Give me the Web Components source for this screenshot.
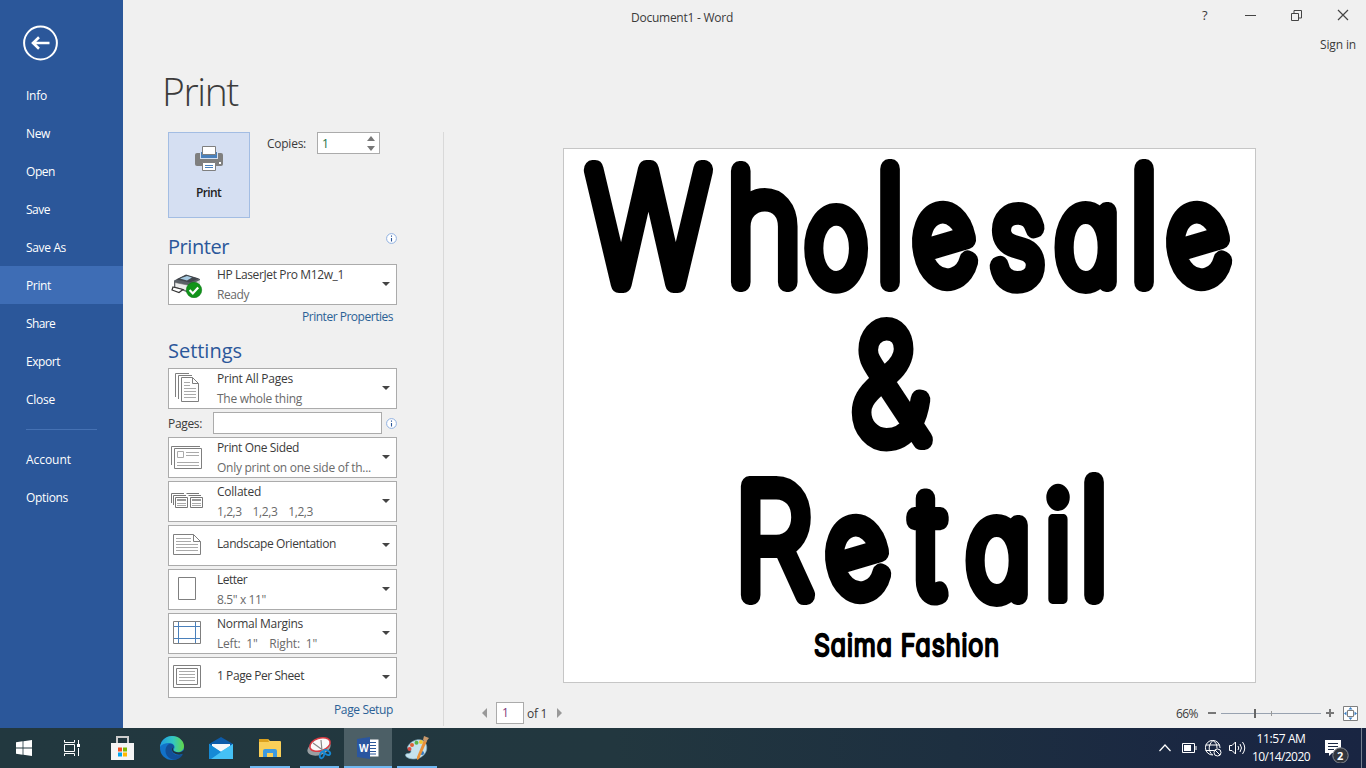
<!DOCTYPE html>
<html lang="en">
<head>
<meta charset="utf-8">
<title>Document1 - Word</title>
<style>
html,body{margin:0;height:100%;overflow:hidden}
body{font-family:"Open Sans","Noto Sans",sans-serif;font-size:12px;color:#3b3b3b;background:#f0f0f0}
</style>
</head>
<body>
<word-app></word-app>
<script>
const make = (name, html, init) => customElements.define(name, class extends HTMLElement {
  constructor() {
    super();
    this.attachShadow({mode: 'open'}).innerHTML = typeof html === 'function' ? html(this) : html;
    if (init) init(this);
  }
});

/* glyph icons */
const icons = {
  back: [36,36,'<circle cx="17.500" cy="18" r="16.400" fill="none" stroke="#fff" stroke-width="2"/><path d="M10 18H26.500M16 12.200 10 18l6 5.800" fill="none" stroke="#fff" stroke-width="2.600"/>'],
  printer: [28,26,'<path d="M2 8h24q2 0 2 2v9q0 2-2 2H2q-2 0-2-2v-9q0-2 2-2z" fill="#7f7f7f"/><path d="M5 7h18v7H5z" fill="#d5e0f2"/><path d="M6 7h16v6H6z" fill="#4a80bb"/><path d="M7.500 1.500h13v8h-13zM7.500 17.500h13v8h-13z" fill="#fff" stroke="#7f7f7f"/><path d="M10 20.500h8M10 22.500h8" stroke="#4a80bb"/><rect x="24" y="17" width="2" height="2" fill="#fff"/>'],
  device: [34,28,'<path d="m3 10.500 12-5.500 14 4v9l-10 5.500L3 17z" fill="#5a6067"/><path d="m5 9.500 10-5 13 4-9 4z" fill="#42474d"/><path d="m9 8.500 7-2.500 5 1.500-5 3z" fill="#a7cbe2"/><path d="m4 12.500 15 3v6.500L4 17z" fill="#eceded" stroke="#666" stroke-width=".6"/><path d="m21 14 8-4v7l-8 5z" fill="#d5d8db"/><path d="m2 17 10 2.500-4 3-7-2.500z" fill="#fff" stroke="#333" stroke-width="1.200"/><circle cx="23" cy="20" r="7.700" fill="#11941a" stroke="#087712" stroke-width=".6"/><path d="m18.600 20 3.200 3.400 5.400-6" fill="none" stroke="#fff" stroke-width="2.200"/>'],
  pages: [34,32,'<g fill="none" stroke="#7f7f7f"><path d="M4.500 25V1.500H18M7.500 27V3.500H21"/><path d="M10.500 5.500H21.500L27.500 11.500V29.500H10.500zM21.500 5.500V11.500H27.500" fill="#fff"/></g><path d="M13 10.500h6M13 13.500h6M13 16.500h12M13 19.500h12M13 22.500h12M13 25.500h12" stroke="#aaa"/>'],
  oneside: [34,28,'<g fill="none" stroke="#7f7f7f"><path d="M.500 22V3.500H29"/><path d="M3.500 5.500h27v20h-27z" fill="#fff"/><path d="M6.500 8.500h6v6h-6z" stroke="#aaa"/></g><path d="M15 9.500h13M15 12.500h13M6 19.500h22M6 22.500h22" stroke="#aaa"/>'],
  collated: [34,20,'<g fill="none" stroke="#777"><path d="M.500 12V2.500H13M2.500 14V4.500H15M15.500 2.500H28M17.500 4.500H30"/><path d="M4.500 6.500h12v10h-12zM19.500 6.500h12v10h-12z" fill="#fff"/></g><path d="M6 9h9M21 9h9" stroke="#999" stroke-width="2"/><path d="M6 12.500h9M6 14.500h9M21 12.500h9M21 14.500h9" stroke="#aaa"/>'],
  landscape: [34,24,'<path d="M2.500 1.500H22.500L29.500 8.500V21.500H2.500zM22.500 1.500V8.500H29.500" fill="#fff" stroke="#7f7f7f"/><path d="M5 5.500h15M5 8.500h15M5 11.500h22M5 14.500h22M5 17.500h22" stroke="#aaa"/>'],
  letter: [34,26,'<path d="M7.500 1.500h17v22h-17z" fill="#fff" stroke="#7f7f7f"/>'],
  margins: [34,26,'<path d="M2.500 1.500h27v22h-27z" fill="#fff" stroke="#7f7f7f"/><path d="M7.500 2v21M24.500 2v21M3 6.500h26M3 18.500h26" stroke="#4a80bb"/>'],
  sheet: [34,26,'<path d="M2.500 1.500h27v22h-27zM5.500 4.500h21v16h-21z" fill="#fff" stroke="#7f7f7f"/><path d="M8 7.500h16M8 10.500h16M8 13.500h16M8 16.500h16" stroke="#aaa"/>'],
  info: [11,11,'<circle cx="5.500" cy="5.500" r="4.900" fill="#fff" stroke="#8fb0e0"/><path d="M5.500 5v3.500M5.500 2.500v1.200" stroke="#2b579a" stroke-width="1.100"/>'],
  min: [11,11,'<path d="M0 5.500h11" stroke="#444"/>'],
  restore: [11,11,'<path d="M.500 3.500h7v7h-7zM3 3V.500h7.500V8H8" fill="none" stroke="#444"/>'],
  close: [12,12,'<path d="m1 1 10 10M11 1 1 11" stroke="#444" stroke-width="1.200"/>'],
  fit: [15,15,'<path d="M.500.500h14v14H.500z" fill="#fff" stroke="#7f7f7f"/><path d="M4.500 4.500h6v6h-6z" fill="none" stroke="#7f7f7f"/><path d="M5.500 3.500h4L7.500 1zM5.500 11.500h4l-2 2.500zM3.500 5.500v4L1 7.500zM11.500 5.500v4l2.500-2z" fill="#3b7fc4"/>'],
  start: [16,16,'<path d="m0 2.200 6.600-.9v6.300H0zM7.400 1.200 16 0v7.600H7.400zM0 8.400h6.600v6.300L0 13.800zM7.400 8.400H16V16l-8.600-1.200z" fill="#fff"/>'],
  task: [16,16,'<path d="M.500 0v2.500h10V0M.500 16v-2.500h10V16M.500 4.500h10v7H.500zM14.500 0v4M14.500 8v8" fill="none" stroke="#fff"/><path d="M13 4h3v3h-3z" fill="#fff"/>'],
  store: [24,26,'<path d="M7 8V2h11v6" fill="none" stroke="#ccc" stroke-width="2"/><path d="M1 8h23v17H1z" fill="#f5f5f5"/><path d="M8 12.500h4v4H8z" fill="#f25022"/><path d="M13 12.500h4v4h-4z" fill="#7fba00"/><path d="M8 17.500h4v4H8z" fill="#00a4ef"/><path d="M13 17.500h4v4h-4z" fill="#ffb900"/>'],
  edge: [24,24,'<defs><linearGradient id="g"><stop stop-color="#1f9de5"/><stop offset=".55" stop-color="#34c7c0"/><stop offset="1" stop-color="#62d846"/></linearGradient></defs><circle cx="12" cy="12" r="12" fill="#1272c9"/><path d="M0 11C1 4 6 0 12 0c7 0 12 5 12 10 0 4-3 6-6 6-3 0-5-1-4-3 2-3-1-6-5-6-4 0-7 1-9 4z" fill="url(#g)"/><path d="M9 8c-5 3-5 12 2 15 5 2 10-1 12-5-5 3-12 0-11-5 0-1 1-2 2-2 0-2-2-4-5-3z" fill="#124f98"/><path d="M14 11c-1 1-2 4 2 5 3 1 6 0 8-2l0 3c-5 4-13 0-12-4 0-1 1-2 2-2z" fill="#20343d"/>'],
  mail: [24,22,'<path d="M0 7 12 0l12 7v3H0z" fill="#0d5ba9"/><path d="M3 7h18v10H3z" fill="#f5f7fa"/><path d="m0 7 12 8 12-8v15H0z" fill="#27a7ec"/><path d="M24 7 0 22h24z" fill="#45c1f5"/><path d="m0 7 12 8L2 22H0z" fill="#168ad5"/>'],
  folder: [22,19,'<path d="M0 1q0-1 1-1h8l2 2h10q1 0 1 1v15H0z" fill="#f9cf58"/><path d="M0 0h9l1 3H0z" fill="#dca11d"/><path d="M4 18v-6q0-2 2-2h10q2 0 2 2v6h-4v-4H8v4z" fill="#3c9ae0"/>'],
  snip: [26,24,'<ellipse cx="12" cy="12" rx="12" ry="7" fill="#9a9fa2" transform="rotate(-18 12 12)"/><ellipse cx="13" cy="8.500" rx="10.500" ry="6.300" fill="#fafafa" stroke="#d93b43" stroke-width="1.500" transform="rotate(-18 13 8.500)"/><path d="m6 7 11 8M14 4l1 11" stroke="#888" stroke-width="1.200"/><g fill="none" stroke="#1688d2" stroke-width="1.800"><ellipse cx="15" cy="19" rx="2" ry="3.300" transform="rotate(20 15 19)"/><ellipse cx="20" cy="16.500" rx="3.500" ry="2" transform="rotate(30 20 16.500)"/></g>'],
  word: [22,22,'<path d="M12 2.500h9.500v17H12z" fill="#fff"/><path d="M13 5.500h6M13 8.500h6M13 11.500h6M13 14.500h6M13 17h6" stroke="#2b579a"/><path d="m0 2 13-2v22L0 20z" fill="#2a56a0"/>'],
  paint: [24,24,'<path d="M3 10C7 3 18 1 21 8c3 7-3 15-12 15-6 0-10-3-8-5 2-1 5 0 5-3 0-2-5-1-3-5z" fill="#c5e2ed" stroke="#7fa9bb" stroke-width=".7"/><circle cx="4.500" cy="13" r="2" fill="#d94b42"/><circle cx="7" cy="9" r="2" fill="#e06036"/><circle cx="11.500" cy="6.800" r="2" fill="#59b44a"/><circle cx="16" cy="6" r="2" fill="#f0c735"/><circle cx="17" cy="17" r="2" fill="#3479bf"/><path d="m19 4 3 1-8 18-2 1v-3z" fill="#e99138"/><path d="m18 4 1-4 5 2-3 4z" fill="#c8986c"/>'],
  up: [12,8,'<path d="m.500 7 5.500-6 5.500 6" fill="none" stroke="#fff" stroke-width="1.200"/>'],
  battery: [15,10,'<path d="M.500.500h12v9H.500zM14 3v4" fill="none" stroke="#fff"/><path d="M2 2h7v6H2z" fill="#fff"/>'],
  globe: [17,17,'<g fill="none" stroke="#fff"><path d="M15 8A7.300 7.300 0 1 0 8 15M.700 5h14M.700 10.500H9M8 .500C3 5 3 11 7.500 15M8 .500c3 2 4 4 4 8"/><circle cx="12.500" cy="12.500" r="3.500"/><path d="m10 10 5 5"/></g>'],
  volume: [17,14,'<path d="M.500 4.500H3L6.500 1v12L3 9.500H.500zM9 5q1.500 2 0 4M11 3q3 4 0 8M13.500 1q4.500 6 0 12" fill="none" stroke="#fff"/>'],
  note: [24,23,'<path d="M0 0h16v13H7l-3 3v-3H0z" fill="#fff"/><path d="M3 3.500h10M3 6.500h10M3 9.500h6" stroke="#1b2944"/><circle cx="15.500" cy="15.500" r="7.700" fill="#32363d" stroke="#858a92"/>'],
};
make('ui-icon', h => {
  const [w, ht, body] = icons[h.getAttribute('name')];
  return `<style>:host{display:block;flex:none;width:${w}px;height:${ht}px}svg{display:block}</style><svg width="${w}" height="${ht}" viewBox="0 0 ${w} ${ht}">${body}</svg>`;
});

/* backstage navigation */
make('nav-item', h => `<style>:host{display:flex;align-items:center;height:38px;padding-left:26px;color:#fff;box-sizing:border-box}:host([active]){background:#3e6db5}</style><slot></slot>`);
make('back-nav', `<style>
:host{display:block;background:#2b579a;height:728px}
ui-icon{margin:0 0 0 23px;padding:25px 0 15px}hr{border:0;height:1px;background:#4571b3;margin:11px 26px 10px;width:71px}</style>
<ui-icon name="back"></ui-icon>
<nav-item><fit-text w="21">Info</fit-text></nav-item><nav-item><fit-text w="24">New</fit-text></nav-item><nav-item><fit-text w="29">Open</fit-text></nav-item><nav-item><fit-text w="24">Save</fit-text></nav-item><nav-item><fit-text w="40">Save As</fit-text></nav-item><nav-item active><fit-text w="25">Print</fit-text></nav-item><nav-item><fit-text w="29">Share</fit-text></nav-item><nav-item><fit-text w="34">Export</fit-text></nav-item><nav-item><fit-text w="29">Close</fit-text></nav-item>
<hr><nav-item><fit-text w="45">Account</fit-text></nav-item><nav-item><fit-text w="42">Options</fit-text></nav-item>`);

/* title bar */
make('title-bar', `<style>
:host{display:block;height:60px}.r{display:flex;align-items:center;height:30px;padding-top:2px}
.r>fit-text:first-child{margin-left:508px}.c{display:flex;align-items:center;margin-left:auto;gap:35px;padding-right:17px;margin-top:-4px}
.s{display:flex;justify-content:flex-end;padding:4px 10px 0 0}</style>
<div class="r"><fit-text w="102">Document1 - Word</fit-text><div class="c"><fit-text w="7" style="font-size:13px;margin-right:1px">?</fit-text><ui-icon name="min"></ui-icon><ui-icon name="restore"></ui-icon><ui-icon name="close"></ui-icon></div></div>
<div class="s"><fit-text w="36">Sign in</fit-text></div>`);

/* settings dropdown with picture, label and detail */
make('option-box', h => `<style>
:host{display:grid;grid-template-columns:46px 1fr 14px;align-items:center;height:41px;box-sizing:border-box;border:1px solid #ababab;background:#fff;padding-left:2px}
ui-icon{align-self:center;margin-top:-2px}.t{display:flex;flex-direction:column;line-height:20px;height:39px;justify-content:center}
.d{color:#6a6a6a}i{border:4px solid transparent;border-top-color:#444;border-bottom:0;width:0;margin-top:-1px}
.one{padding-bottom:3px;height:36px}</style>
<ui-icon name="${h.getAttribute('icon')}"></ui-icon><div class="t${h.querySelector('[slot]') ? '' : ' one'}"><slot></slot><div class="d"><slot name="detail"></slot></div></div><i></i>`);

make('print-panel', `<style>
:host{display:block;width:229px;padding-left:45px}
.top{display:flex;height:86px}.btn{box-sizing:border-box;width:82px;height:86px;border:1px solid #a3bde3;background:#d5dff2;display:flex;flex-direction:column;align-items:center;padding-top:12px;gap:13px;color:#222;font-weight:600}
.btn fit-text{margin-right:1px}
.cp{margin:3px 0 0 17px}.spin{margin-left:11px;width:63px;height:22px;box-sizing:border-box;border:1px solid #ababab;background:#fff;display:flex;justify-content:space-between;align-items:center;padding:0 4px;color:#217346}
.ar{display:flex;flex-direction:column;gap:5px}.ar i{width:0;border:4px solid transparent}.ar i:first-child{border-top:0;border-bottom:5px solid #777}.ar i:last-child{border-bottom:0;border-top:5px solid #777}
.h{display:flex;justify-content:space-between;color:#2b579a;font-size:20px;line-height:30px;height:32px;margin-top:14px}.h ui-icon{margin-top:1px}
.link{display:flex;justify-content:flex-end;color:#2b6196;padding-right:4px;line-height:16px;margin-top:4px}
.set{display:grid;gap:3px}.pg{display:flex;align-items:center;height:22px}.pg b{flex:1;height:20px;border:1px solid #ababab;background:#fff;margin:0 4px 0 11px}</style>
<div class="top"><div class="btn"><ui-icon name="printer"></ui-icon><fit-text w="25">Print</fit-text></div><fit-text class="cp" w="39">Copies:</fit-text><div class="spin"><span>1</span><span class="ar"><i></i><i></i></span></div></div>
<div class="h"><fit-text w="61">Printer</fit-text><ui-icon name="info"></ui-icon></div>
<option-box icon="device"><fit-text w="127">HP LaserJet Pro M12w_1</fit-text><fit-text slot="detail" w="32">Ready</fit-text></option-box>
<div class="link"><fit-text w="91">Printer Properties</fit-text></div>
<div class="h" style="margin-top:11px"><fit-text w="74">Settings</fit-text></div>
<div class="set">
<option-box icon="pages"><fit-text w="76">Print All Pages</fit-text><fit-text slot="detail" w="85">The whole thing</fit-text></option-box>
<div class="pg"><fit-text w="34">Pages:</fit-text><b></b><ui-icon name="info"></ui-icon></div>
<option-box icon="oneside"><fit-text w="82">Print One Sided</fit-text><fit-text slot="detail" w="154">Only print on one side of th...</fit-text></option-box>
<option-box icon="collated"><fit-text w="44">Collated</fit-text><fit-text slot="detail" w="96">1,2,3    1,2,3    1,2,3</fit-text></option-box>
<option-box icon="landscape"><fit-text w="119">Landscape Orientation</fit-text></option-box>
<option-box icon="letter"><fit-text w="30">Letter</fit-text><fit-text slot="detail" w="49">8.5" x 11"</fit-text></option-box>
<option-box icon="margins"><fit-text w="86">Normal Margins</fit-text><fit-text slot="detail" w="100">Left:  1"    Right:  1"</fit-text></option-box>
<option-box icon="sheet"><fit-text w="87">1 Page Per Sheet</fit-text></option-box></div>
<div class="link"><fit-text w="59">Page Setup</fit-text></div>`);

/* printed page: hand-lettered words; each glyph is [char, x, size, rotation, baseline shift, extra style] */
const S = .84;
const words = [
  {y:282, w:20, g:[['W',588,155,0,1],['h',727,152],['o',806,124],['l',876,155],['e',922,126,-14,6],['s',991,127],['a',1056,129],['l',1130,155],['e',1176,126,-14,6]]},
  {y:440, w:20, g:[['&',852,153]]},
  {y:595, w:20, g:[['R',735,150],['e',835,126,-14,6],['t',914,142],['a',967,129],['i',1043,147,0,4,'font-weight:400;stroke-width:10px'],['l',1080,155]]},
];
make('page-preview', `<style>:host{display:block;width:691px;height:533px;border:1px solid #c6c6c6;background:#fff}svg{display:block;overflow:visible;font-family:Inter,"Open Sans",sans-serif;font-weight:100;font-feature-settings:"cv11"}text{stroke:#000;stroke-linejoin:round;stroke-linecap:round;white-space:pre}</style>
<svg width="691" height="533" viewBox="564 149 691 533"><g transform="scale(${S} 1)">
${words.map(l => `<text stroke-width="${l.w}">${l.g.map(([c,x,s,r,d,st]) => `<tspan x="${x/S}" y="${l.y+(d||0)}" font-size="${s}" rotate="${r||0}" style="${st||''}">${c}</tspan>`).join('')}</text>`).join('')}
<text x="${814/S}" y="656" font-size="30" stroke-width="2.600" textLength="${185/S}" style="font-weight:300">Saima Fashion</text></g></svg>`);

make('preview-bar', `<style>
:host{display:flex;align-items:center;height:30px;padding:0 8px 0 38px}
.l,.r{width:0;border:5px solid transparent}.l{border-right:5px solid #999;border-left:0}.r{border-left:5px solid #999;border-right:0}
.n{width:26px;height:20px;border:1px solid #ababab;background:#fff;margin:0 3px 0 9px;line-height:20px;text-indent:5px;color:#80397b}
.r{margin-left:10px}.z{margin-left:auto;display:flex;align-items:center}
.m{width:8px;height:2px;background:#777;margin:0 5px 0 10px}.tr{width:100px;height:9px;background:linear-gradient(#666,#666) 33px 0/2px 9px no-repeat,linear-gradient(#999,#999) 50px 2px/1px 5px no-repeat,linear-gradient(#98a2b0,#98a2b0) 0 4px/100px 1px no-repeat}
.p{width:8px;height:8px;margin:0 9px 0 5px;background:linear-gradient(#777,#777) 0 3px/8px 2px no-repeat,linear-gradient(#777,#777) 3px 0/2px 8px no-repeat}</style>
<i class="l"></i><div class="n">1</div><fit-text w="20">of 1</fit-text><i class="r"></i>
<div class="z"><fit-text w="22">66%</fit-text><i class="m"></i><i class="tr"></i><i class="p"></i><ui-icon name="fit"></ui-icon></div>`);

make('back-stage', `<style>
:host{display:block;height:728px;background:#f0f0f0}
h1{margin:0;font-size:39px;font-weight:300;line-height:62px;height:72px;padding-left:39px}
.b{display:grid;grid-template-columns:321px 1fr;height:596px}.l{height:594px;border-right:1px solid #d9d9d9}
.v{display:flex;flex-direction:column}page-preview{margin:16px 0 15px 119px}</style>
<title-bar></title-bar><h1><fit-text w="76">Print</fit-text></h1>
<div class="b"><div class="l"><print-panel></print-panel></div><div class="v"><page-preview></page-preview><preview-bar></preview-bar></div></div>`);

/* taskbar */
make('task-button', h => `<style>
:host{display:flex;position:relative;align-items:center;justify-content:center;width:${h.getAttribute('w')}px;height:40px;flex:none}
:host([open])::after{content:"";position:absolute;left:5px;right:5px;bottom:0;height:2px;background:#6fb8f2}
:host([active]){background:#4c5f66}:host([active])::after{left:0;right:0}
b{position:absolute;left:15px;top:12px;color:#fff;font:bold 10px/16px "Open Sans",sans-serif}</style><ui-icon name="${h.getAttribute('icon')}"></ui-icon>${h.hasAttribute('active') ? '<b>W</b>' : ''}`);
make('task-bar', `<style>
:host{display:flex;align-items:center;height:40px;background:linear-gradient(90deg,#22383f 0,#22373f 45%,#1d2f40 70%,#1a2742 88%,#192542);color:#fff}
.t{display:flex;align-items:center;margin-left:auto;height:40px}.k{display:flex;flex-direction:column;align-items:center;line-height:18px;width:58px;margin:0 15px 0 6px}
.n{position:relative;margin-right:12px;top:3px}.n span{position:absolute;left:12px;top:7px;font:bold 11px/17px "Open Sans",sans-serif}
.e{width:4px;height:40px;border-left:1px solid #76808f}</style>
<task-button w="48" icon="start"></task-button><task-button w="48" icon="task"></task-button><task-button w="51" icon="store"></task-button><task-button w="49" icon="edge"></task-button><task-button w="49" icon="mail"></task-button><task-button w="50" icon="folder" open></task-button><task-button w="49" icon="snip" open></task-button><task-button w="48" icon="word" open active></task-button><task-button w="50" icon="paint" open></task-button>
<div class="t"><ui-icon name="up"></ui-icon><ui-icon name="battery" style="margin-left:11px"></ui-icon><ui-icon name="globe" style="margin-left:8px"></ui-icon><ui-icon name="volume" style="margin-left:7px"></ui-icon>
<div class="k"><fit-text w="49">11:57 AM</fit-text><fit-text w="58">10/14/2020</fit-text></div><div class="n"><ui-icon name="note"></ui-icon><span>2</span></div><div class="e"></div></div>`);

make('word-app', `<style>:host{display:grid;grid-template:728px 40px/123px 1243px;width:1366px;height:768px}task-bar{grid-column:1/3}</style><back-nav></back-nav><back-stage></back-stage><task-bar></task-bar>`);

/* a run of text tracked to the given advance width */
customElements.define('fit-text', class extends HTMLElement {
  connectedCallback() {
    if (this.shadowRoot) return;
    this.attachShadow({mode: 'open'}).innerHTML = '<style>:host{display:block;width:max-content;flex:none;white-space:pre}span{display:inline-block}</style><span><slot></slot></span>';
    const s = this.shadowRoot.querySelector('span');
    s.style.letterSpacing = (this.getAttribute('w') - s.getBoundingClientRect().width) / this.textContent.length + 'px';
  }
});
</script>
</body>
</html>
